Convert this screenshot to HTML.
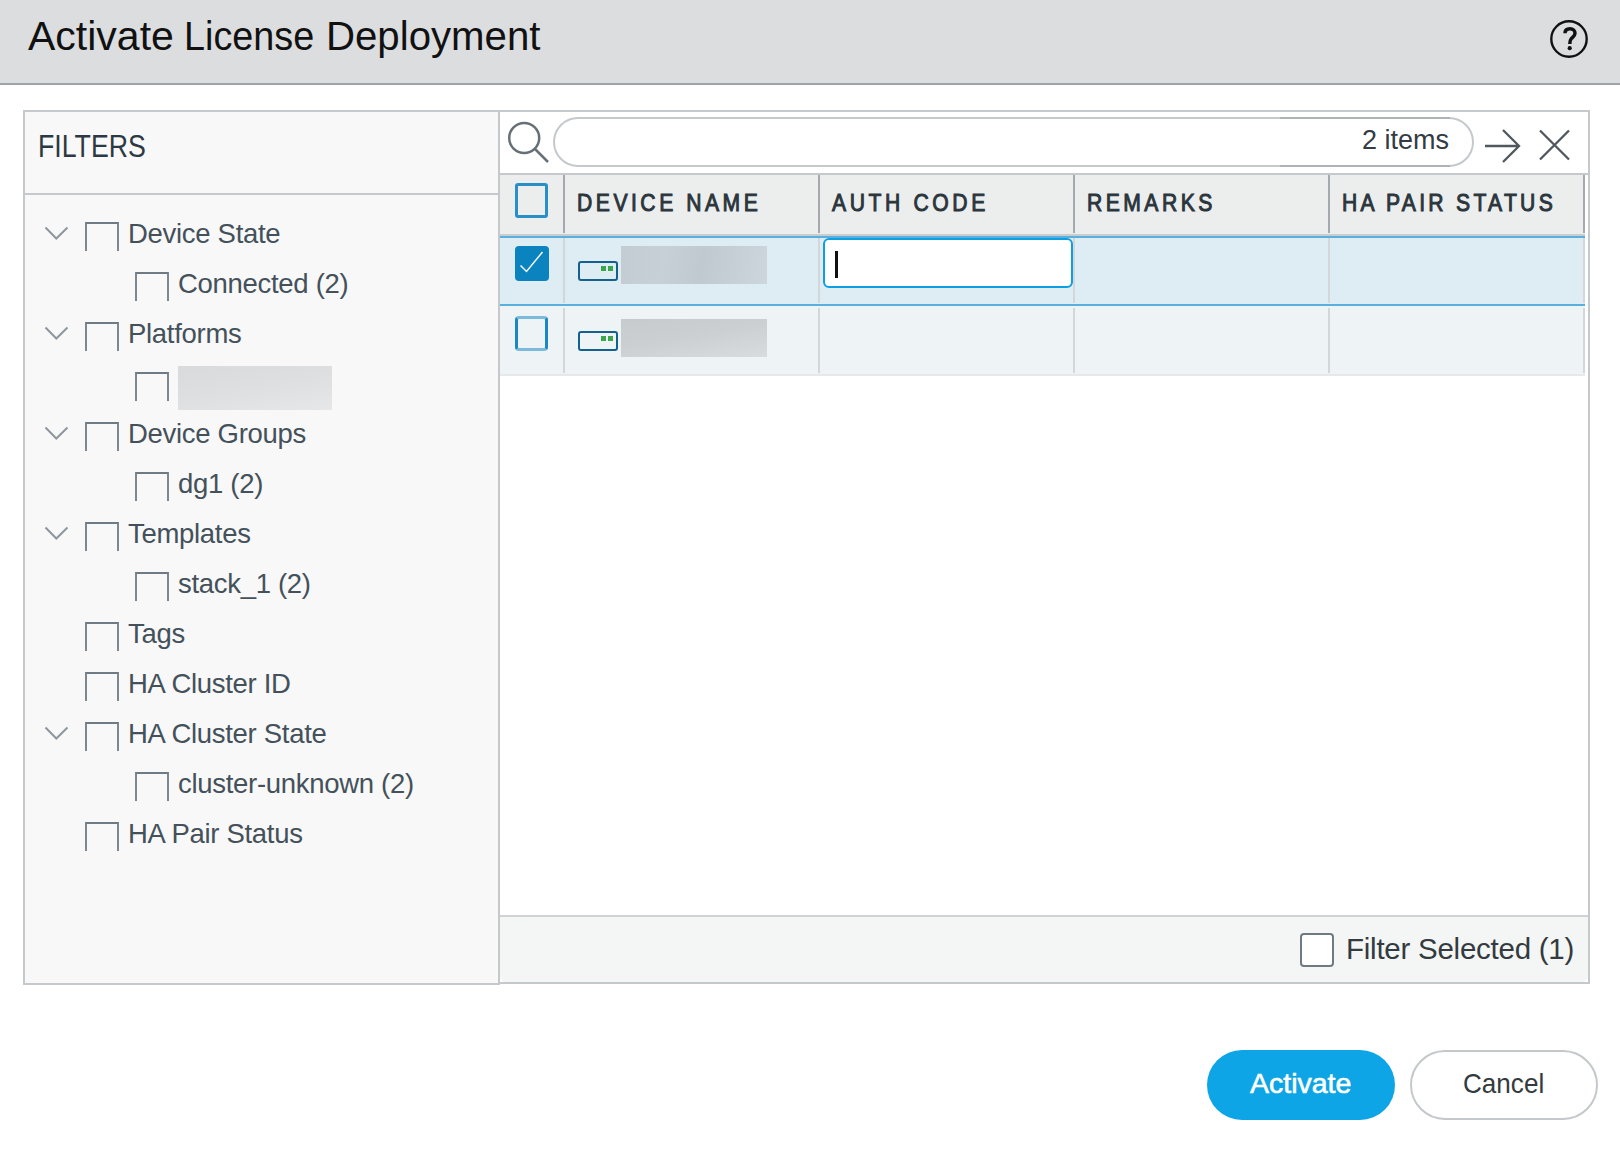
<!DOCTYPE html>
<html><head><meta charset="utf-8">
<style>
*{margin:0;padding:0;box-sizing:border-box}
html,body{width:1620px;height:1154px;overflow:hidden;background:#fff;font-family:"Liberation Sans",sans-serif}
.a{position:absolute}
.t{position:absolute;white-space:nowrap;line-height:1}
.fc{position:absolute;width:34px;height:29px;border:2px solid #6f7b84;border-bottom:none;border-left-color:#7c878f;border-right-color:#7c878f}
.cdiv{position:absolute;width:2px;background:#a3a9ad}
.rdiv{position:absolute;width:2px;background:#d3d7d9}
</style></head><body>
<div class="a" style="left:0;top:0;width:1620px;height:85px;background:#dcdddf;border-bottom:2px solid #9ea3a7"></div>
<div class="t" style="left:28px;top:16px;font-size:41px;color:#111;">Activate</div>
<div class="t" style="left:184.2px;top:16px;font-size:41px;color:#111;transform:scaleX(0.921);transform-origin:0 0">License</div>
<div class="t" style="left:325.5px;top:16px;font-size:41px;color:#111;transform:scaleX(0.98);transform-origin:0 0">Deployment</div>
<svg class="a" style="left:1548px;top:18px" width="42" height="42" viewBox="0 0 42 42">
<circle cx="21" cy="21" r="17.7" fill="none" stroke="#111" stroke-width="2.4"/>
<g transform="translate(-1548 -18)"><path d="M1565 33.2 C1565 30.2 1567.2 28.8 1570 28.8 C1573 28.8 1575 30.6 1575 33.2 C1575 36 1572.6 37.2 1571.3 38.6 C1570.1 39.9 1569.8 41.2 1569.8 44" fill="none" stroke="#111" stroke-width="3.5"/><circle cx="1569.7" cy="48.2" r="2.1" fill="#111"/></g>
</svg>
<div class="a" style="left:23px;top:110px;width:477px;height:875px;background:#f8f8f8;border:2px solid #c5c9cc"></div>
<div class="t" style="left:38px;top:130px;font-size:32px;color:#2d3942;transform:scaleX(0.835);transform-origin:0 0">FILTERS</div>
<div class="a" style="left:25px;top:193px;width:473px;height:2px;background:#c5c9cc"></div>
<svg class="a" style="left:44px;top:226px" width="25" height="15" viewBox="0 0 25 15"><path d="M1.5 1.5 L12.3 12.5 L23.5 1.5" fill="none" stroke="#8e979d" stroke-width="2"/></svg>
<div class="fc" style="left:85px;top:222px"></div>
<div class="t" style="left:128px;top:220px;font-size:27.5px;color:#44515b;letter-spacing:-0.3px">Device State</div>
<div class="fc" style="left:135px;top:272px"></div>
<div class="t" style="left:178px;top:270px;font-size:27.5px;color:#44515b;letter-spacing:-0.3px">Connected (2)</div>
<svg class="a" style="left:44px;top:326px" width="25" height="15" viewBox="0 0 25 15"><path d="M1.5 1.5 L12.3 12.5 L23.5 1.5" fill="none" stroke="#8e979d" stroke-width="2"/></svg>
<div class="fc" style="left:85px;top:322px"></div>
<div class="t" style="left:128px;top:320px;font-size:27.5px;color:#44515b;letter-spacing:-0.3px">Platforms</div>
<div class="fc" style="left:135px;top:372px"></div>
<div class="a" style="left:178px;top:366px;width:154px;height:44px;background:linear-gradient(170deg,#d9dadc 0%,#dedfe1 50%,#e6e7e8 100%)"></div>
<svg class="a" style="left:44px;top:426px" width="25" height="15" viewBox="0 0 25 15"><path d="M1.5 1.5 L12.3 12.5 L23.5 1.5" fill="none" stroke="#8e979d" stroke-width="2"/></svg>
<div class="fc" style="left:85px;top:422px"></div>
<div class="t" style="left:128px;top:420px;font-size:27.5px;color:#44515b;letter-spacing:-0.3px">Device Groups</div>
<div class="fc" style="left:135px;top:472px"></div>
<div class="t" style="left:178px;top:470px;font-size:27.5px;color:#44515b;letter-spacing:-0.3px">dg1 (2)</div>
<svg class="a" style="left:44px;top:526px" width="25" height="15" viewBox="0 0 25 15"><path d="M1.5 1.5 L12.3 12.5 L23.5 1.5" fill="none" stroke="#8e979d" stroke-width="2"/></svg>
<div class="fc" style="left:85px;top:522px"></div>
<div class="t" style="left:128px;top:520px;font-size:27.5px;color:#44515b;letter-spacing:-0.3px">Templates</div>
<div class="fc" style="left:135px;top:572px"></div>
<div class="t" style="left:178px;top:570px;font-size:27.5px;color:#44515b;letter-spacing:-0.3px">stack_1 (2)</div>
<div class="fc" style="left:85px;top:622px"></div>
<div class="t" style="left:128px;top:620px;font-size:27.5px;color:#44515b;letter-spacing:-0.3px">Tags</div>
<div class="fc" style="left:85px;top:672px"></div>
<div class="t" style="left:128px;top:670px;font-size:27.5px;color:#44515b;letter-spacing:-0.3px">HA Cluster ID</div>
<svg class="a" style="left:44px;top:726px" width="25" height="15" viewBox="0 0 25 15"><path d="M1.5 1.5 L12.3 12.5 L23.5 1.5" fill="none" stroke="#8e979d" stroke-width="2"/></svg>
<div class="fc" style="left:85px;top:722px"></div>
<div class="t" style="left:128px;top:720px;font-size:27.5px;color:#44515b;letter-spacing:-0.3px">HA Cluster State</div>
<div class="fc" style="left:135px;top:772px"></div>
<div class="t" style="left:178px;top:770px;font-size:27.5px;color:#44515b;letter-spacing:-0.3px">cluster-unknown (2)</div>
<div class="fc" style="left:85px;top:822px"></div>
<div class="t" style="left:128px;top:820px;font-size:27.5px;color:#44515b;letter-spacing:-0.3px">HA Pair Status</div>
<div class="a" style="left:498px;top:110px;width:1092px;height:874px;background:#fff;border:2px solid #c5c9cc"></div>
<svg class="a" style="left:500px;top:112px" width="60" height="60" viewBox="500 112 60 60"><circle cx="524.2" cy="138" r="15" fill="none" stroke="#667077" stroke-width="2.5"/><path d="M535 149 L548 162" stroke="#667077" stroke-width="2.5" fill="none"/></svg>
<div class="a" style="left:553px;top:117px;width:921px;height:50px;border:2px solid #c5c9cc;border-radius:25px;background:#fff"></div>
<div class="a" style="left:1280px;top:117px;width:170px;height:2px;background:#adb2b5"></div>
<div class="a" style="left:1280px;top:165px;width:170px;height:2px;background:#adb2b5"></div>
<div class="t" style="left:1362px;top:127px;font-size:27px;color:#333c42;">2 items</div>
<svg class="a" style="left:1480px;top:125px" width="95" height="42" viewBox="1480 125 95 42"><path d="M1485 146 L1519 146 M1503 130 L1519 146 L1503 162" fill="none" stroke="#50585e" stroke-width="2.3"/><path d="M1540 130.5 L1569 159.5 M1569 130.5 L1540 159.5" fill="none" stroke="#50585e" stroke-width="2.3"/></svg>
<div class="a" style="left:500px;top:173px;width:1088px;height:2px;background:#c5c9cc"></div>
<div class="a" style="left:500px;top:175px;width:1085px;height:59px;background:#eceeee"></div>
<div class="a" style="left:500px;top:234px;width:1085px;height:2px;background:#c9cdd0"></div>
<div class="a" style="left:515px;top:183px;width:33px;height:35px;border:3px solid #2b8fc7;border-radius:3px"></div>
<div class="cdiv" style="left:563px;top:175px;height:58px"></div>
<div class="cdiv" style="left:818px;top:175px;height:58px"></div>
<div class="cdiv" style="left:1073px;top:175px;height:58px"></div>
<div class="cdiv" style="left:1328px;top:175px;height:58px"></div>
<div class="cdiv" style="left:1583px;top:175px;height:58px"></div>
<div class="t" style="left:577px;top:190.5px;font-size:24px;color:#2b353c;-webkit-text-stroke:1px #2b353c;letter-spacing:4.0px;transform:scaleX(0.88);transform-origin:0 0">DEVICE NAME</div>
<div class="t" style="left:832px;top:190.5px;font-size:24px;color:#2b353c;-webkit-text-stroke:1px #2b353c;letter-spacing:4.1px;transform:scaleX(0.88);transform-origin:0 0">AUTH CODE</div>
<div class="t" style="left:1087px;top:190.5px;font-size:24px;color:#2b353c;-webkit-text-stroke:1px #2b353c;letter-spacing:3.95px;transform:scaleX(0.88);transform-origin:0 0">REMARKS</div>
<div class="t" style="left:1342px;top:190.5px;font-size:24px;color:#2b353c;-webkit-text-stroke:1px #2b353c;letter-spacing:3.75px;transform:scaleX(0.88);transform-origin:0 0">HA PAIR STATUS</div>
<div class="a" style="left:500px;top:236px;width:1085px;height:2px;background:#5aafdc"></div>
<div class="a" style="left:500px;top:238px;width:1085px;height:66px;background:#deecf4"></div>
<div class="a" style="left:500px;top:304px;width:1085px;height:2px;background:#5aafdc"></div>
<div class="a" style="left:500px;top:306px;width:1085px;height:68px;background:#eef4f6"></div>
<div class="a" style="left:500px;top:374px;width:1085px;height:2px;background:#e6e9ea"></div>
<div class="rdiv" style="left:563px;top:238px;height:65px"></div>
<div class="rdiv" style="left:563px;top:308px;height:65px"></div>
<div class="rdiv" style="left:818px;top:238px;height:65px"></div>
<div class="rdiv" style="left:818px;top:308px;height:65px"></div>
<div class="rdiv" style="left:1073px;top:238px;height:65px"></div>
<div class="rdiv" style="left:1073px;top:308px;height:65px"></div>
<div class="rdiv" style="left:1328px;top:238px;height:65px"></div>
<div class="rdiv" style="left:1328px;top:308px;height:65px"></div>
<div class="rdiv" style="left:1583px;top:238px;height:65px"></div>
<div class="rdiv" style="left:1583px;top:308px;height:65px"></div>
<div class="a" style="left:515px;top:246px;width:34px;height:35px;background:#0a83be;border-radius:4px"></div>
<svg class="a" style="left:515px;top:246px" width="34" height="35" viewBox="0 0 34 35"><path d="M5.5 19.5 L11.5 25.5 L27.5 6" fill="none" stroke="#f4f9fc" stroke-width="1.5"/></svg>
<div class="a" style="left:515px;top:316px;width:33px;height:35px;border:3px solid #1c88c3;border-top-color:#7cbadb;border-bottom-color:#7cbadb;border-radius:4px"></div>
<div class="a" style="left:578px;top:261px;width:40px;height:20px;border:2.8px solid #14618e;border-radius:3px"></div>
<div class="a" style="left:601px;top:266px;width:5px;height:5px;background:#3aa84a"></div>
<div class="a" style="left:608px;top:266px;width:5px;height:5px;background:#3aa84a"></div>
<div class="a" style="left:578px;top:331px;width:40px;height:20px;border:2.8px solid #14618e;border-radius:3px"></div>
<div class="a" style="left:601px;top:336px;width:5px;height:5px;background:#3aa84a"></div>
<div class="a" style="left:608px;top:336px;width:5px;height:5px;background:#3aa84a"></div>
<div class="a" style="left:621px;top:246px;width:146px;height:38px;background:linear-gradient(100deg,#c2ccd2 0%,#c6d0d6 30%,#bfc9cf 55%,#ccd6dc 100%)"></div>
<div class="a" style="left:621px;top:319px;width:146px;height:38px;background:linear-gradient(170deg,#c7cbce 0%,#cbcfd2 45%,#d8dcde 100%)"></div>
<div class="a" style="left:823px;top:238px;width:250px;height:50px;border:2px solid #0e9fe2;border-radius:6px;background:#fff"></div>
<div class="a" style="left:835px;top:251px;width:3px;height:27px;background:#111"></div>
<div class="a" style="left:500px;top:915px;width:1088px;height:2px;background:#cfd3d5"></div>
<div class="a" style="left:500px;top:917px;width:1088px;height:65px;background:#f4f6f6;border-radius:0 0 6px 6px"></div>
<div class="a" style="left:1300px;top:933px;width:34px;height:34px;border:2.5px solid #6f7a82;border-radius:4px;background:#fff"></div>
<div class="t" style="left:1346px;top:934px;font-size:29.5px;color:#333b40;letter-spacing:-0.25px">Filter Selected (1)</div>
<div class="a" style="left:1207px;top:1050px;width:188px;height:70px;border-radius:35px;background:#0ea5e6"></div>
<div class="t" style="left:1250px;top:1069px;font-size:28.5px;color:#fff;-webkit-text-stroke:0.6px #fff">Activate</div>
<div class="a" style="left:1410px;top:1050px;width:188px;height:70px;border-radius:35px;border:2px solid #c4c8cb;background:#fff"></div>
<div class="t" style="left:1463px;top:1069px;font-size:28.5px;color:#333b40;transform:scaleX(0.915);transform-origin:0 0">Cancel</div>
</body></html>
